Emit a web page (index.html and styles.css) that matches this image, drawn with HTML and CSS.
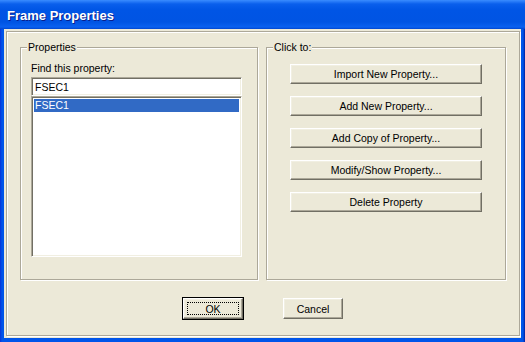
FILE: index.html
```html
<!DOCTYPE html>
<html lang="en">
<head>
    <meta charset="UTF-8">
    <title>Frame Properties</title>
    <link rel="stylesheet" href="styles.css">
</head>
<body>
    <div class="window">
        <div class="titlebar">
            <span class="title">Frame Properties</span>
        </div>
        <div class="client">
            <div class="frame">
                <div class="groups">
                    <fieldset class="group props">
                        <legend>Properties</legend>
                        <div class="props-body">
                            <label class="find-label">Find this property:</label>
                            <div class="input sunken">FSEC1</div>
                            <div class="list sunken">
                                <div class="item selected">FSEC1</div>
                            </div>
                        </div>
                    </fieldset>
                    <fieldset class="group actions">
                        <legend>Click to:</legend>
                        <div class="actions-body">
                            <button class="btn wide">Import New Property...</button>
                            <button class="btn wide">Add New Property...</button>
                            <button class="btn wide">Add Copy of Property...</button>
                            <button class="btn wide">Modify/Show Property...</button>
                            <button class="btn wide">Delete Property</button>
                        </div>
                    </fieldset>
                </div>
                <div class="footer">
                    <button class="btn small default"><span class="focus">OK</span></button>
                    <button class="btn small">Cancel</button>
                </div>
            </div>
        </div>
    </div>
</body>
</html>
```

FILE: styles.css
```css
* {
    box-sizing: border-box;
}
body {
    margin: 0;
    font-family: "Liberation Sans", Arial, sans-serif;
    font-size: 10.5px;
    color: #000;
    background: #fff;
}
.window {
    width: 525px;
    height: 342px;
    display: flex;
    flex-direction: column;
    background: linear-gradient(to right, #0831D9 0, #0055EA 2px, #0055EA 523px, #001EA0 525px);
}
.titlebar {
    height: 29px;
    flex: none;
    display: flex;
    align-items: center;
    padding: 1px 0 0 7px;
    background: linear-gradient(#3A8CFF 0, #0A5FEC 4px, #0055E5 10px, #0054E3 22px, #0A61F0 27px, #0046CF 29px);
}
.title {
    color: #fff;
    font-weight: bold;
    font-size: 13px;
    text-shadow: 1px 1px #0A1E8C;
}
.client {
    flex: 1;
    margin: 0 4px 4px;
    padding: 2px;
    display: flex;
    background: #ECE9D8;
}
.frame {
    flex: 1;
    border: 1px solid #ACA899;
    box-shadow: inset 1px 1px #fff, 1px 1px #fff;
    padding: 9px 13px 0;
    display: flex;
    flex-direction: column;
}
.groups {
    display: flex;
    gap: 8px;
    height: 239px;
}
.group {
    margin: 0;
    padding: 0;
    min-width: 0;
    border: 1px solid #ACA899;
    box-shadow: inset 1px 1px #fff, 1px 1px #fff;
}
.group legend {
    margin-left: 6px;
    padding: 0 1px;
    line-height: 12px;
    background: #ECE9D8;
}
.props {
    width: 238px;
}
.actions {
    width: 240px;
}
.props-body {
    padding: 9px 0 0 10px;
    display: flex;
    flex-direction: column;
}
.find-label {
    line-height: 12px;
    margin-bottom: 3px;
}
.sunken {
    width: 211px;
    background: #fff;
    border: 1px solid;
    border-color: #ACA899 #fff #fff #ACA899;
    box-shadow: inset 1px 1px #716F64, inset -1px -1px #F1EFE2;
}
.input {
    height: 19px;
    padding: 3px 0 0 3px;
    line-height: 12px;
}
.list {
    height: 161px;
    padding: 2px;
}
.item {
    height: 13px;
    line-height: 13px;
    padding-left: 1px;
}
.item.selected {
    background: #316AC5;
    color: #fff;
}
.actions-body {
    padding: 11px 0 0 23px;
    display: flex;
    flex-direction: column;
    gap: 12px;
}
.btn {
    font: inherit;
    color: #000;
    background: #ECE9D8;
    border: 1px solid;
    border-color: #fff #716F64 #716F64 #fff;
    box-shadow: inset -1px -1px #ACA899, inset 1px 1px #F1EFE2;
    padding: 0;
    height: 20px;
    line-height: 16px;
}
.btn.wide {
    width: 192px;
}
.footer {
    margin-top: 18px;
    display: flex;
    justify-content: center;
    gap: 40px;
}
.btn.small {
    width: 60px;
    height: 21px;
}
.btn.default {
    outline: 1px solid #000;
    outline-offset: 0;
}
.focus {
    display: block;
    margin: 2px 3px;
    height: 13px;
    line-height: 12px;
    border: 1px dotted #000;
}
```
